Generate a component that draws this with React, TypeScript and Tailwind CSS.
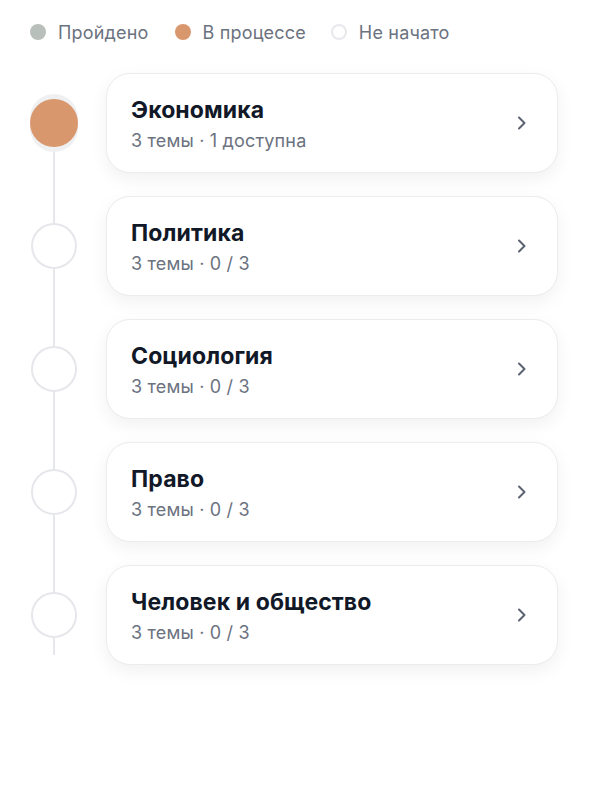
import React from "react";

type Item = { title: string; sub: string; active?: boolean };

const items: Item[] = [
  { title: "Экономика", sub: "3 темы · 1 доступна", active: true },
  { title: "Политика", sub: "3 темы · 0 / 3" },
  { title: "Социология", sub: "3 темы · 0 / 3" },
  { title: "Право", sub: "3 темы · 0 / 3" },
  { title: "Человек и общество", sub: "3 темы · 0 / 3" },
];

function Chevron() {
  return (
    <svg width="12" height="16" viewBox="0 0 12 16" fill="none">
      <path d="M3 2.5L8.5 8L3 13.5" stroke="#5b6270" strokeWidth="2" strokeLinecap="round" strokeLinejoin="round" />
    </svg>
  );
}

export default function App() {
  return (
    <div
      className="min-h-[800px] w-[590px] bg-white"
      style={{ fontFamily: "Inter, 'Noto Sans', sans-serif" }}
    >
      <div className="flex items-center pl-[30px] pt-[11px] h-[42px] box-content text-[18px] tracking-[0.01em] text-[#6b7280]">
        <div className="flex items-center gap-[12px]">
          <span className="w-[16px] h-[16px] rounded-full bg-[#b9bfba]" />
          <span>Пройдено</span>
        </div>
        <div className="flex items-center gap-[12px] ml-[26px]">
          <span className="w-[16px] h-[16px] rounded-full bg-[#d9976e]" />
          <span>В процессе</span>
        </div>
        <div className="flex items-center gap-[12px] ml-[25px]">
          <span className="w-[16px] h-[16px] rounded-full bg-white border-2 border-[#e8e9ec]" />
          <span>Не начато</span>
        </div>
      </div>

      <div className="relative mt-[20px] pl-[30px] pr-[32px] flex flex-col gap-[23px]">
        <div className="absolute left-[53px] top-[50px] bottom-[10px] w-[2px] bg-[#e5e7eb]" />
        {items.map((it) => (
          <div key={it.title} className="relative flex items-center">
            <div className="w-[48px] flex justify-center shrink-0">
              {it.active ? (
                <span className="w-[58px] h-[58px] rounded-full bg-[#eff0f2] flex items-center justify-center">
                  <span className="w-[48px] h-[48px] rounded-full bg-[#d9976e]" />
                </span>
              ) : (
                <span className="w-[46px] h-[46px] rounded-full bg-white border-2 border-[#e6e7eb]" />
              )}
            </div>
            <div className="ml-[28px] flex-1 h-[100px] rounded-[24px] bg-white border border-[#ebecef] shadow-[0_6px_18px_rgba(0,0,0,0.06)] flex items-center justify-between pl-[24px] pr-[29px]">
              <div className="flex flex-col pt-[2px]">
                <div className="text-[23px] leading-[28px] font-bold tracking-[0.005em] text-[#111827]">{it.title}</div>
                <div className="text-[18px] leading-[22px] mt-[6px] tracking-[0.01em] text-[#6b7280]">{it.sub}</div>
              </div>
              <Chevron />
            </div>
          </div>
        ))}
      </div>
    </div>
  );
}
